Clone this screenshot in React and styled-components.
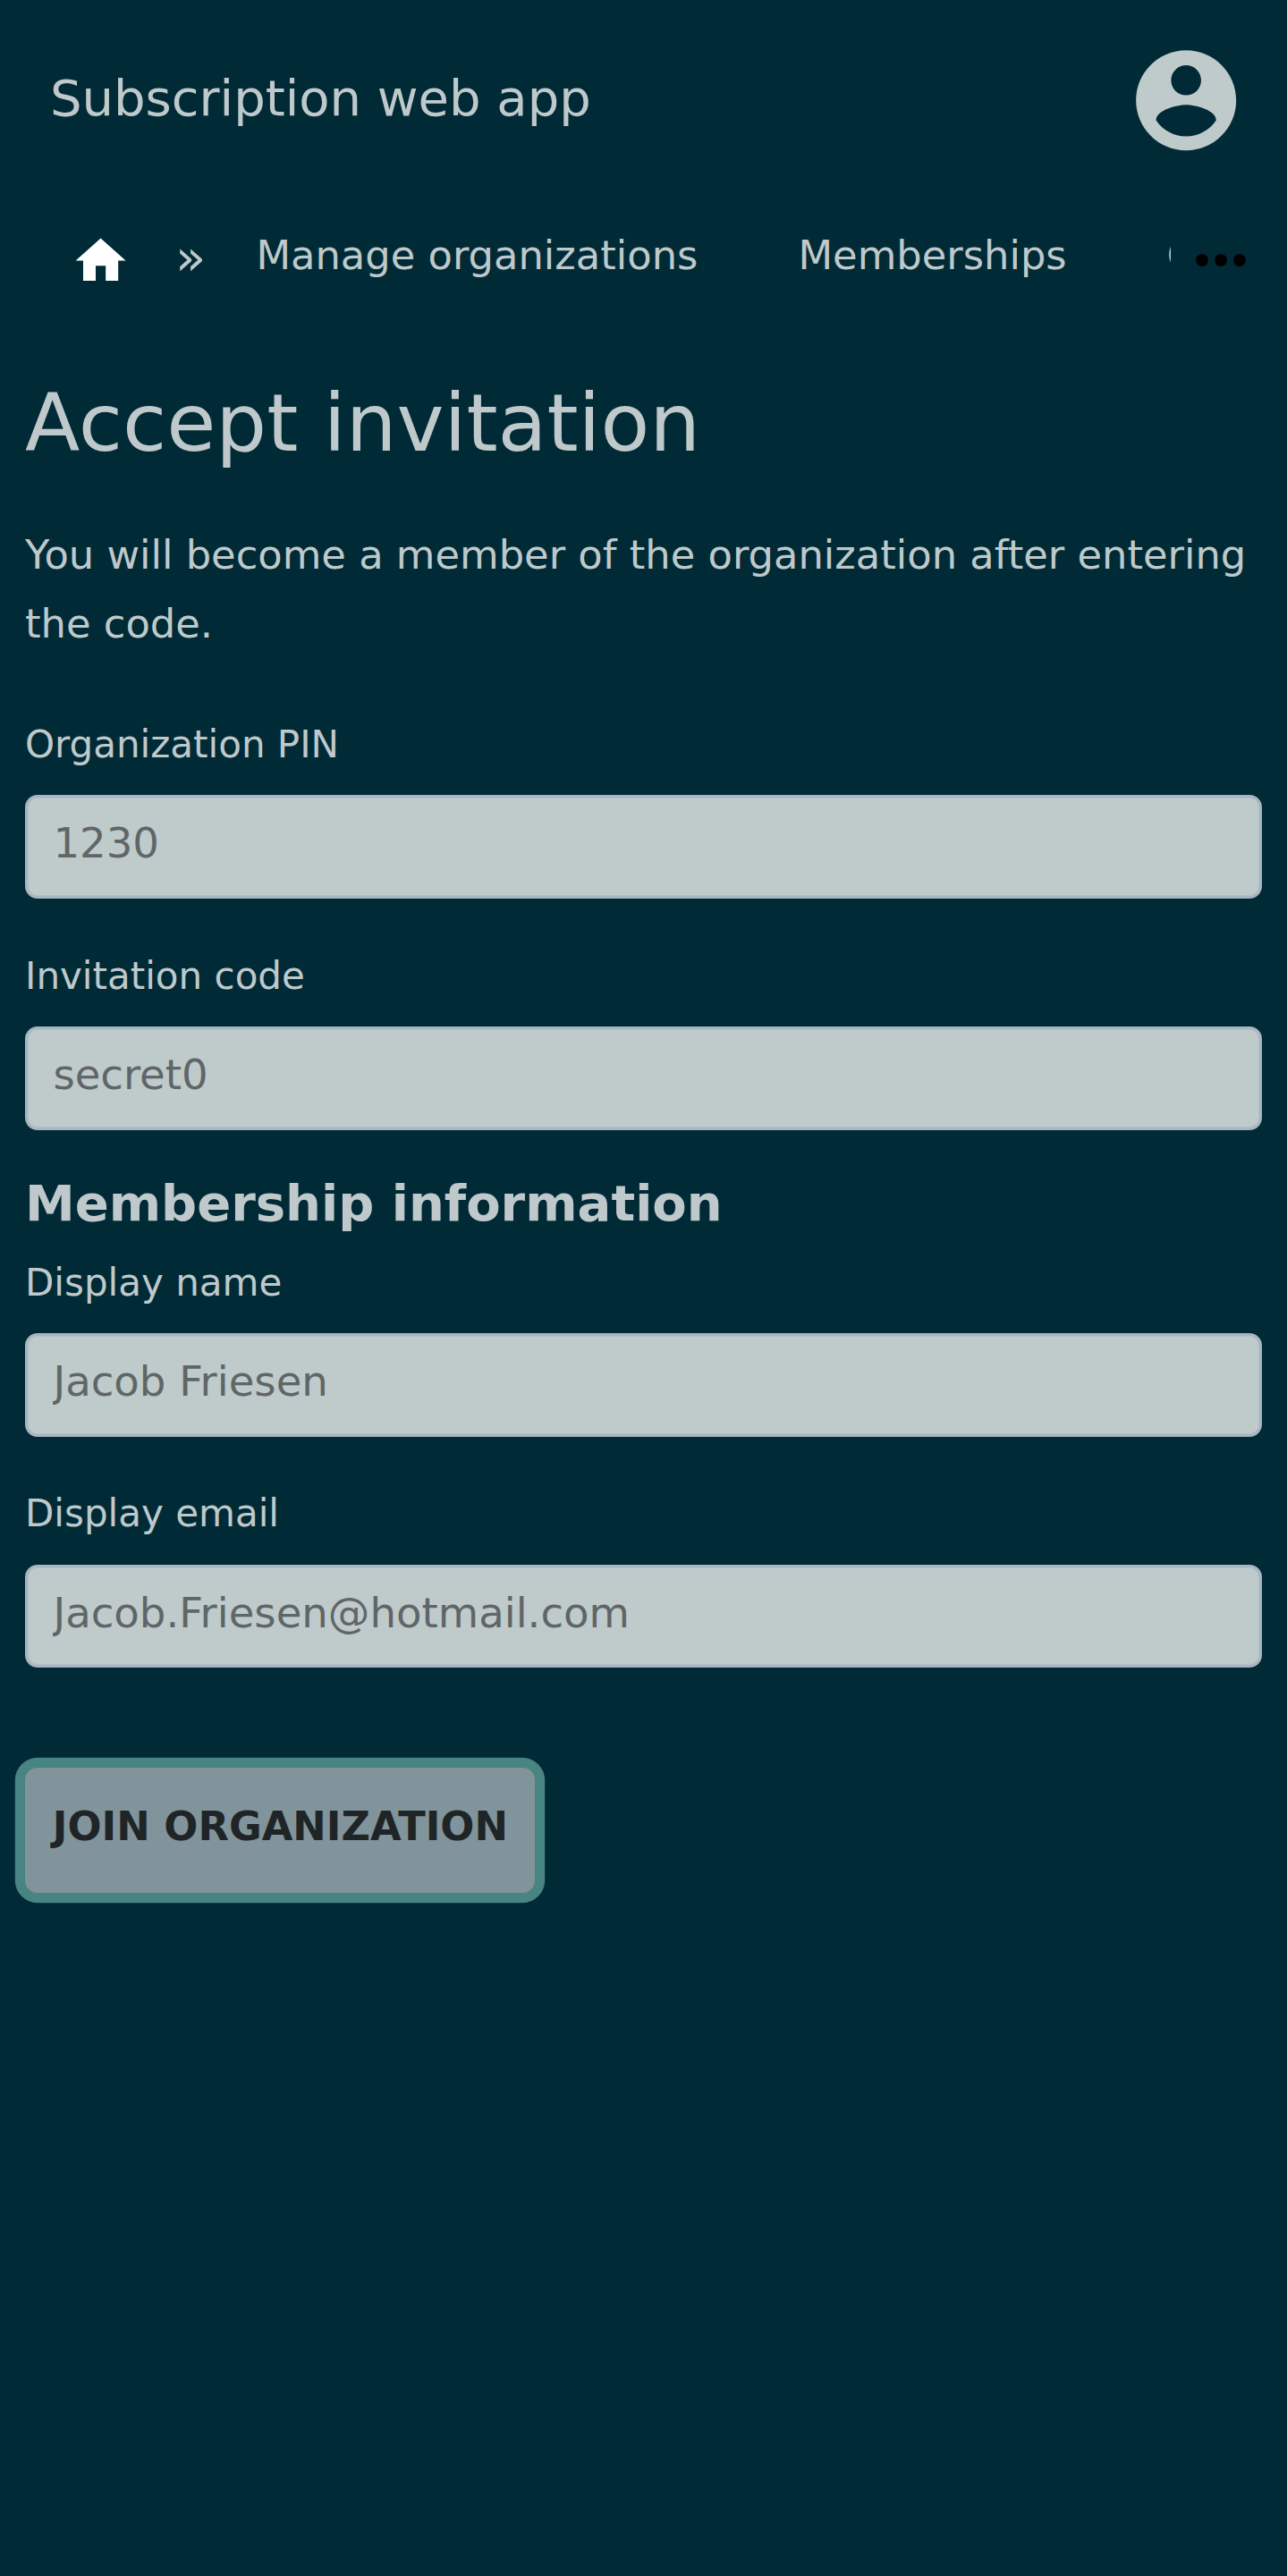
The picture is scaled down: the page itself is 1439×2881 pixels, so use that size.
import React from 'react';
import styled, { createGlobalStyle } from 'styled-components';

const GlobalStyle = createGlobalStyle`
  *, *::before, *::after { box-sizing: border-box; }
  body {
    margin: 0;
    background: #002b36;
    color: #bfc9cb;
    font-family: 'DejaVu Sans', sans-serif;
    font-size: 44.8px;
  }
`;

const Page = styled.div`
  min-height: 2881px;
  background: #002b36;
`;

const Header = styled.header`
  display: flex;
  align-items: center;
  justify-content: space-between;
  height: 224px;
  padding: 0 45.2px 0 56px;
`;

const Brand = styled.span`
  font-size: 56px;
  line-height: 80px;
  padding-bottom: 4px;
`;

const Icon = styled.svg`
  display: block;
  flex: none;
  width: ${(p) => p.$size}px;
  height: ${(p) => p.$size}px;
  fill: ${(p) => p.$color};
`;

const Nav = styled.nav`
  display: flex;
  align-items: flex-start;
  height: 193px;
  padding: 23.5px 32px 0 79px;
`;

const HomeLink = styled.a`
  padding-top: 10.5px;
`;

const Separator = styled.span`
  width: 89.6px;
  padding: 10px 0 0 49.8px;
  font-size: 56px;
  line-height: 60px;
`;

const Trail = styled.ol`
  display: flex;
  flex: 1;
  gap: 112px;
  min-width: 0;
  margin: 0 0 0 50.6px;
  padding: 0;
  overflow: hidden;
  list-style: none;
  line-height: 76px;
  white-space: nowrap;
`;

const MoreButton = styled.button`
  margin: 1px 0 0 14px;
  padding: 0;
  border: 0;
  background: none;
`;

const Main = styled.main`
  padding: 0 28px;
`;

const Title = styled.h1`
  margin: 0;
  font-size: 89.6px;
  font-weight: 400;
  line-height: 112px;
`;

const Intro = styled.p`
  margin: 54.4px 0 66px;
  line-height: 76.7px;
`;

const Field = styled.label`
  display: block;
  margin-bottom: ${(p) => p.$gap}px;
`;

const FieldLabel = styled.span`
  display: block;
  margin-bottom: 25.6px;
  font-size: 42px;
  line-height: 60.8px;
`;

const Input = styled.input`
  display: block;
  width: 100%;
  height: 115.7px;
  padding: 0 28.4px 8px;
  border: 3px solid #a8b5c2;
  border-radius: 14px;
  outline: 0;
  background: #bfcacb;
  box-shadow: inset 0 0 0 1px #b4c0c7;
  font: 46.6px 'DejaVu Sans', sans-serif;

  &::placeholder {
    color: #5f6668;
    opacity: 1;
  }
`;

const SectionTitle = styled.h2`
  margin: 0 0 23.4px;
  font-size: 56px;
  font-weight: 700;
  line-height: 70px;
`;

const SubmitButton = styled.button`
  display: block;
  height: 139.8px;
  padding: 0 30px 9px 30.8px;
  border: 0;
  border-radius: 14px;
  background: #81949b;
  box-shadow: 0 0 0 11.2px #488482;
  color: #1f2527;
  font: 700 44.8px 'DejaVu Sans', sans-serif;
  text-transform: uppercase;
`;

const crumbs = ['Manage organizations', 'Memberships', 'Organization'];

function TextField({ label, placeholder, gap }) {
  return (
    <Field $gap={gap}>
      <FieldLabel>{label}</FieldLabel>
      <Input placeholder={placeholder} />
    </Field>
  );
}

export default function App() {
  return (
    <Page>
      <GlobalStyle />
      <Header>
        <Brand>Subscription web app</Brand>
        <Icon $size={134.4} $color="#bfcacb" viewBox="0 0 24 24">
          <path d="M12 2C6.48 2 2 6.48 2 12s4.48 10 10 10 10-4.48 10-10S17.52 2 12 2zm0 3c1.66 0 3 1.34 3 3s-1.34 3-3 3-3-1.34-3-3 1.34-3 3-3zm0 14.2c-2.5 0-4.71-1.28-6-3.22.03-1.99 4-3.08 6-3.08 1.99 0 5.97 1.09 6 3.08-1.29 1.94-3.5 3.22-6 3.22z" />
        </Icon>
      </Header>
      <Nav>
        <HomeLink>
          <Icon $size={67.2} $color="#fff" viewBox="0 0 24 24">
            <path d="M10 20v-6h4v6h5v-8h3L12 3 2 12h3v8z" />
          </Icon>
        </HomeLink>
        <Separator>»</Separator>
        <Trail>
          {crumbs.map((name) => (
            <li key={name}>{name}</li>
          ))}
        </Trail>
        <MoreButton>
          <Icon $size={84} $color="#000" viewBox="0 0 24 24">
            <circle cx="6" cy="12" r="2" />
            <circle cx="12" cy="12" r="2" />
            <circle cx="18" cy="12" r="2" />
          </Icon>
        </MoreButton>
      </Nav>
      <Main>
        <Title>Accept invitation</Title>
        <Intro>You will become a member of the organization after entering the code.</Intro>
        <TextField label="Organization PIN" placeholder="1230" gap={56.8} />
        <TextField label="Invitation code" placeholder="secret0" gap={47.4} />
        <SectionTitle>Membership information</SectionTitle>
        <TextField label="Display name" placeholder="Jacob Friesen" gap={56.8} />
        <TextField label="Display email" placeholder="Jacob.Friesen@hotmail.com" gap={111.7} />
        <SubmitButton>Join organization</SubmitButton>
      </Main>
    </Page>
  );
}
